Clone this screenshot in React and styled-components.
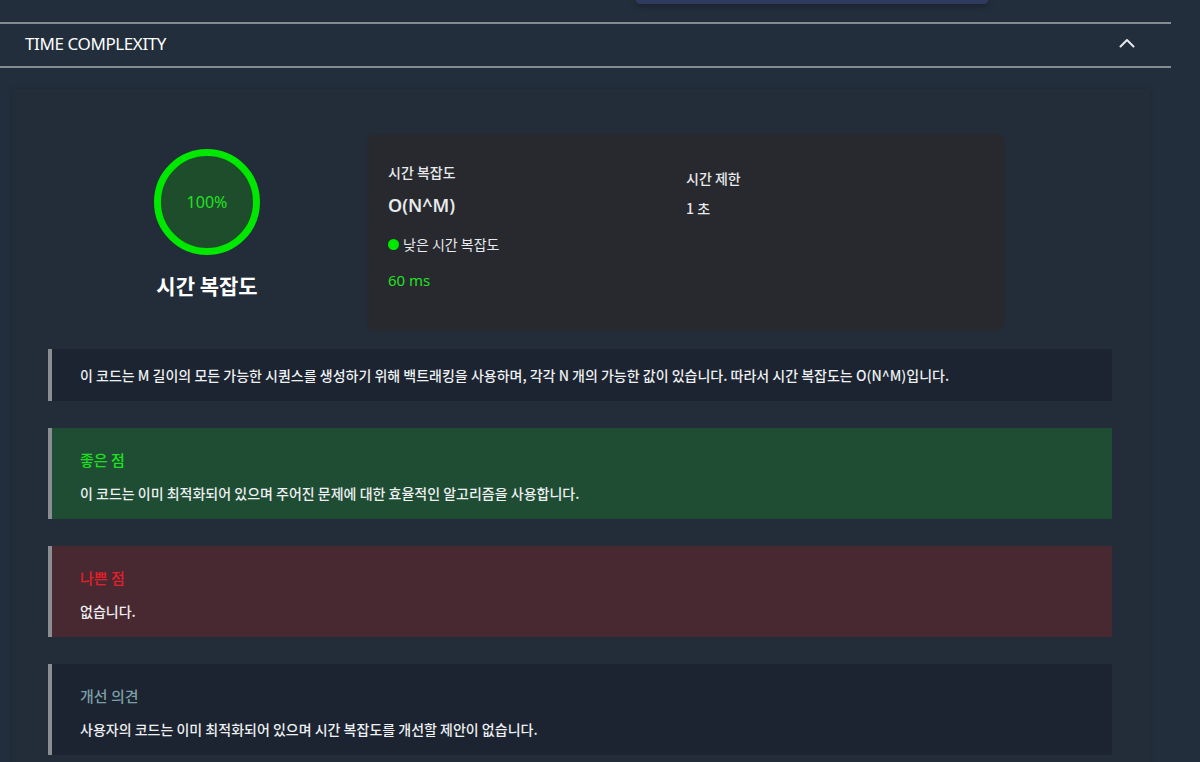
import styled, { createGlobalStyle } from "styled-components";

const GlobalStyle = createGlobalStyle`
  html, body {
    margin: 0;
    padding: 0;
    background: #232e3c;
    font-family: "Noto Sans CJK KR", "Noto Sans", sans-serif;
    color: #f1f3f5;
  }
`;

const feedback = [
  { kind: "good", title: "좋은 점", text: "이 코드는 이미 최적화되어 있으며 주어진 문제에 대한 효율적인 알고리즘을 사용합니다." },
  { kind: "bad", title: "나쁜 점", text: "없습니다." },
  { kind: "tip", title: "개선 의견", text: "사용자의 코드는 이미 최적화되어 있으며 시간 복잡도를 개선할 제안이 없습니다." },
];

const tones = {
  info: { bg: "#1b2430", title: "#f1f3f5" },
  good: { bg: "#1e4d33", title: "#1fe01f" },
  bad: { bg: "#482831", title: "#e3202a" },
  tip: { bg: "#1b2430", title: "#7d9ea6" },
};

const App = () => {
  return (
    <Page>
      <GlobalStyle />
      <TopStrip>
        <TopButton />
      </TopStrip>
      <Section>
        <SectionHeader>
          <SectionTitle>TIME COMPLEXITY</SectionTitle>
          <Chevron viewBox="0 0 16 10">
            <path d="M1.5 8.5 L8 2 L14.5 8.5" />
          </Chevron>
        </SectionHeader>
        <Panel>
          <Summary>
            <ScoreColumn>
              <Ring>100%</Ring>
              <ScoreLabel>시간 복잡도</ScoreLabel>
            </ScoreColumn>
            <StatCard>
              <StatColumn>
                <StatLabel>시간 복잡도</StatLabel>
                <StatBig>O(N^M)</StatBig>
                <Level>
                  <Dot />
                  낮은 시간 복잡도
                </Level>
                <Runtime>60 ms</Runtime>
              </StatColumn>
              <StatColumn $offset>
                <StatLabel>시간 제한</StatLabel>
                <StatValue>1 초</StatValue>
              </StatColumn>
            </StatCard>
          </Summary>
          <Notes>
            <Note $tone="info">
              <NoteText>
                이 코드는 M 길이의 모든 가능한 시퀀스를 생성하기 위해 백트래킹을 사용하며, 각각 N 개의 가능한 값이 있습니다. 따라서 시간 복잡도는 O(N^M)입니다.
              </NoteText>
            </Note>
            {feedback.map((f) => (
              <Note key={f.kind} $tone={f.kind} $tall>
                <NoteTitle $tone={f.kind}>{f.title}</NoteTitle>
                <NoteText>{f.text}</NoteText>
              </Note>
            ))}
          </Notes>
        </Panel>
      </Section>
    </Page>
  );
};

export default App;

const Page = styled.div`
  min-height: 762px;
  width: 1200px;
  overflow: hidden;
`;

const TopStrip = styled.div`
  height: 22px;
  width: 1171px;
`;

const TopButton = styled.div`
  margin-left: 636px;
  width: 352px;
  height: 4px;
  background: #2f3b5e;
  border-radius: 0 0 8px 8px;
  box-shadow: 0 2px 6px rgba(0, 0, 0, 0.35);
`;

const Section = styled.section`
  width: 1171px;
`;

const SectionHeader = styled.div`
  height: 42px;
  box-sizing: content-box;
  border-top: 2px solid #868b92;
  border-bottom: 2px solid #868b92;
  display: flex;
  align-items: center;
  justify-content: space-between;
  padding: 0 36px 0 25px;
`;

const SectionTitle = styled.h2`
  margin: -3px 0 0;
  font-family: "Noto Sans", sans-serif;
  font-size: 17px;
  font-weight: 400;
  letter-spacing: -0.4px;
  color: #ffffff;
`;

const Chevron = styled.svg`
  width: 16px;
  height: 10px;
  fill: none;
  stroke: #e6e8ea;
  stroke-width: 2;
  stroke-linecap: round;
  stroke-linejoin: round;
  margin-top: -5px;
`;

const Panel = styled.div`
  margin: 21px 21px 0 12px;
  padding: 45px 38px 40px 36px;
  background: #232d3a;
  box-shadow: 0 0 4px rgba(0, 0, 0, 0.18);
`;

const Summary = styled.div`
  display: flex;
  align-items: flex-start;
  padding-left: 59px;
`;

const ScoreColumn = styled.div`
  width: 200px;
  margin-top: 15px;
  margin-right: 60px;
  display: flex;
  flex-direction: column;
  align-items: center;
`;

const Ring = styled.div`
  width: 92px;
  height: 92px;
  border-radius: 50%;
  border: 7px solid #00e800;
  background: #1e4d2c;
  display: flex;
  align-items: center;
  justify-content: center;
  font-family: "Noto Sans", sans-serif;
  font-size: 16px;
  color: #22e022;
`;

const ScoreLabel = styled.div`
  margin-top: 15px;
  font-size: 21px;
  font-weight: 700;
  color: #ffffff;
`;

const StatCard = styled.div`
  width: 638px;
  height: 197px;
  box-sizing: border-box;
  padding: 28px 21px;
  background: #27292e;
  border-radius: 8px;
  display: flex;
`;

const StatColumn = styled.div`
  width: 298px;
  display: flex;
  flex-direction: column;
  padding-top: ${(p) => (p.$offset ? "6px" : "0")};
`;

const StatLabel = styled.div`
  font-size: 14px;
  line-height: 20px;
  font-weight: 500;
  color: #e8eaed;
`;

const StatBig = styled.div`
  margin-top: 9px;
  font-family: "Noto Sans", sans-serif;
  font-size: 18px;
  line-height: 28px;
  font-weight: 600;
  color: #e8eaed;
`;

const StatValue = styled.div`
  margin-top: 10px;
  font-size: 14px;
  line-height: 20px;
  font-weight: 500;
  color: #e8eaed;
`;

const Level = styled.div`
  margin-top: 15px;
  display: flex;
  align-items: center;
  gap: 4px;
  font-size: 14px;
  line-height: 20px;
  color: #e8eaed;
`;

const Dot = styled.span`
  width: 11px;
  height: 11px;
  border-radius: 50%;
  background: #00e800;
`;

const Runtime = styled.div`
  margin-top: 15px;
  font-family: "Noto Sans", sans-serif;
  font-size: 15px;
  line-height: 22px;
  color: #22e022;
`;

const Notes = styled.div`
  margin-top: 18px;
  display: flex;
  flex-direction: column;
  gap: 27px;
`;

const Note = styled.div`
  border-left: 4px solid #8a8d91;
  background: ${(p) => tones[p.$tone].bg};
  padding: ${(p) => (p.$tall ? "20px 28px 16px" : "16px 28px")};
`;

const NoteTitle = styled.div`
  font-size: 15px;
  line-height: 24px;
  font-weight: 500;
  color: ${(p) => tones[p.$tone].title};
  margin-bottom: 11px;
`;

const NoteText = styled.div`
  font-size: 14px;
  line-height: 20px;
  font-weight: 500;
  color: #eef0f2;
`;
